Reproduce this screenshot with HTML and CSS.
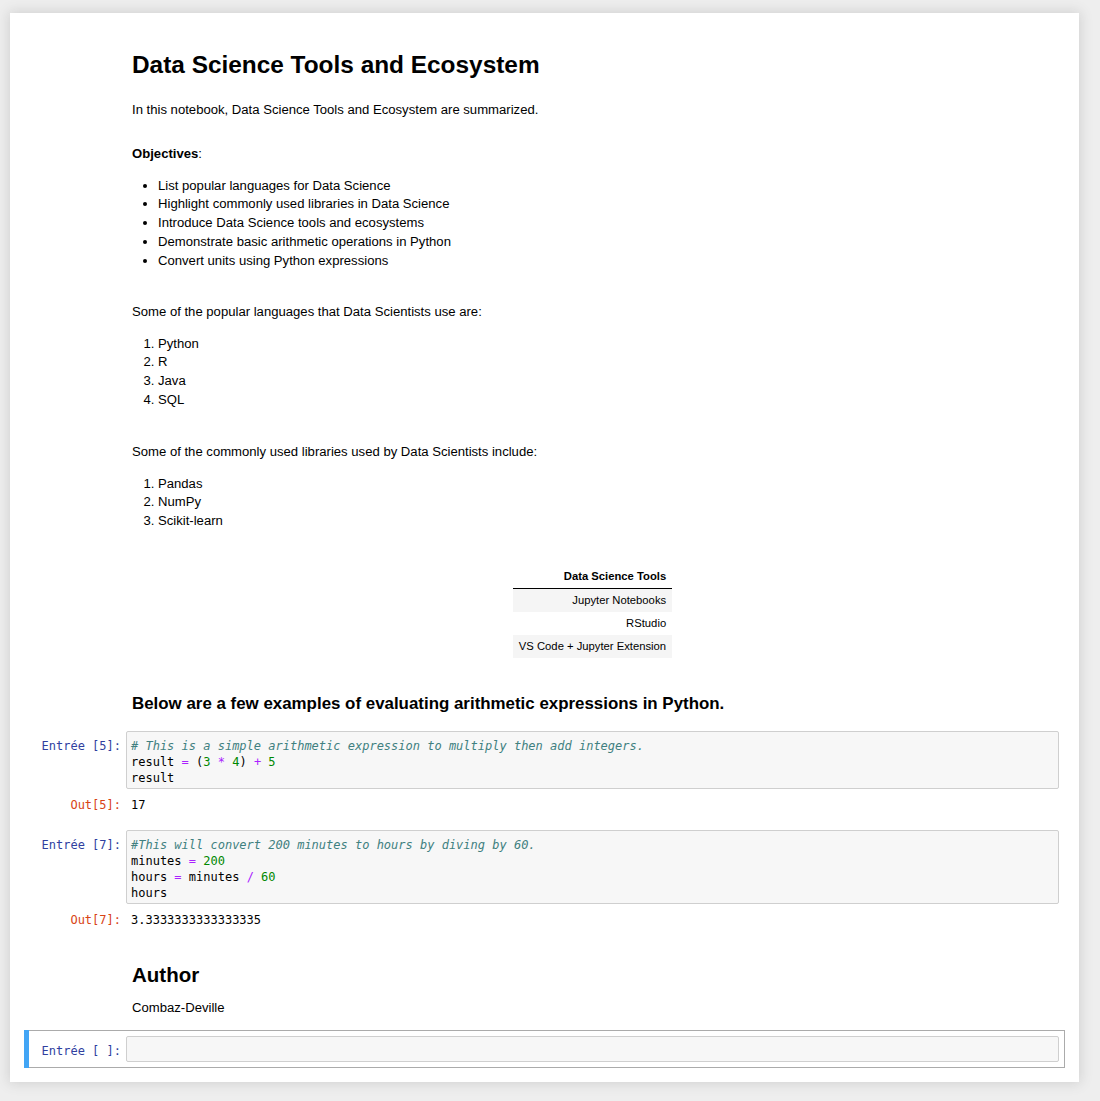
FILE: index.html
```html
<!DOCTYPE html>
<html lang="fr">
<head>
<meta charset="utf-8">
<title>Data Science Tools and Ecosystem</title>
<link rel="stylesheet" href="styles.css">
</head>
<body>
<div class="notebook">
  <div class="cell md-cell">
    <div class="prompt"></div>
    <div class="render">
      <h1 class="title">Data Science Tools and Ecosystem</h1>
      <p class="p-intro">In this notebook, Data Science Tools and Ecosystem are summarized.</p>
      <p class="p-obj"><strong>Objectives</strong>:</p>
      <ul class="list">
        <li>List popular languages for Data Science</li>
        <li>Highlight commonly used libraries in Data Science</li>
        <li>Introduce Data Science tools and ecosystems</li>
        <li>Demonstrate basic arithmetic operations in Python</li>
        <li>Convert units using Python expressions</li>
      </ul>
      <p class="p-section">Some of the popular languages that Data Scientists use are:</p>
      <ol class="list">
        <li>Python</li>
        <li>R</li>
        <li>Java</li>
        <li>SQL</li>
      </ol>
      <p class="p-section p-section2">Some of the commonly used libraries used by Data Scientists include:</p>
      <ol class="list">
        <li>Pandas</li>
        <li>NumPy</li>
        <li>Scikit-learn</li>
      </ol>
      <table class="tools">
        <thead><tr><th>Data Science Tools</th></tr></thead>
        <tbody>
          <tr><td>Jupyter Notebooks</td></tr>
          <tr><td>RStudio</td></tr>
          <tr><td>VS Code + Jupyter Extension</td></tr>
        </tbody>
      </table>
      <h4 class="sub">Below are a few examples of evaluating arithmetic expressions in Python.</h4>
    </div>
  </div>

  <div class="cell code-cell">
    <div class="row">
      <div class="prompt in-prompt">Entrée&nbsp;[5]:</div>
      <div class="input"><pre class="code"><span class="c"># This is a simple arithmetic expression to multiply then add integers.</span>
result <span class="o">=</span> (<span class="n">3</span> <span class="o">*</span> <span class="n">4</span>) <span class="o">+</span> <span class="n">5</span>
result</pre></div>
    </div>
    <div class="row out-row">
      <div class="prompt out-prompt">Out[5]:</div>
      <div class="output"><pre class="out">17</pre></div>
    </div>
  </div>

  <div class="cell code-cell">
    <div class="row">
      <div class="prompt in-prompt">Entrée&nbsp;[7]:</div>
      <div class="input"><pre class="code"><span class="c">#This will convert 200 minutes to hours by diving by 60.</span>
minutes <span class="o">=</span> <span class="n">200</span>
hours <span class="o">=</span> minutes <span class="o">/</span> <span class="n">60</span>
hours</pre></div>
    </div>
    <div class="row out-row">
      <div class="prompt out-prompt">Out[7]:</div>
      <div class="output"><pre class="out">3.3333333333333335</pre></div>
    </div>
  </div>

  <div class="cell md-cell">
    <div class="prompt"></div>
    <div class="render">
      <h2 class="author">Author</h2>
      <p class="p-author">Combaz-Deville</p>
    </div>
  </div>

  <div class="cell code-cell selected">
    <div class="row">
      <div class="prompt in-prompt">Entrée&nbsp;[&nbsp;]:</div>
      <div class="input"><pre class="code code-empty"> </pre></div>
    </div>
  </div>
</div>
</body>
</html>
```

FILE: styles.css
```css
html, body {
  margin: 0;
  padding: 0;
}
body {
  background: #eeeeee;
  padding-top: 13px;
  min-height: 1101px;
  box-sizing: border-box;
  font-family: "Liberation Sans", Arial, sans-serif;
  font-size: 13.125px;
  line-height: 18.75px;
  color: #000;
}
.notebook {
  width: 1069px;
  margin-left: 10px;
  box-sizing: border-box;
  padding: 14px 14px 14px 14px;
  background: #fff;
  box-shadow: 0 0 12px 1px rgba(87, 87, 87, 0.2);
}
.cell {
  position: relative;
  border: 1px solid transparent;
  padding: 5px;
}
.md-cell {
  display: flex;
}
.prompt {
  width: 96px;
  flex: none;
  box-sizing: border-box;
  padding-right: 5px;
  text-align: right;
  font-family: "DejaVu Sans Mono", monospace;
  font-size: 12px;
  line-height: 16px;
}
.render {
  flex: 1;
  padding: 0 6px;
}
.render p, .render h1, .render h2, .render h4, .render ul, .render ol {
  margin: 0;
}
.title {
  font-size: 24.4px;
  line-height: 29px;
  font-weight: bold;
  margin-top: 17px !important;
}
.p-intro { margin-top: 21.6px !important; }
.p-obj { margin-top: 25.25px !important; }
.list {
  margin-top: 13.25px !important;
  padding-left: 26px;
}
.p-section { margin-top: 32.25px !important; }
.p-section2 { margin-top: 33px !important; }

.tools {
  margin: 33.6px auto 0;
  border-collapse: collapse;
  font-size: 11.25px;
  line-height: 12px;
}
.tools th, .tools td {
  text-align: right;
  padding: 5.5px 5.6px;
}
.tools th {
  font-weight: bold;
  padding: 5.25px 5.6px 6.25px;
  border-bottom: 1px solid #000;
}
.tools tbody tr:nth-child(odd) {
  background: #f5f5f5;
}
.sub {
  font-size: 16.9px;
  line-height: 20px;
  font-weight: bold;
  margin-top: 36.5px !important;
  margin-bottom: 5px !important;
}
.row {
  display: flex;
}
.in-prompt {
  color: #303f9f;
  padding-top: 7px;
}
.out-prompt {
  color: #d84315;
}
.input {
  flex: 1;
  min-width: 0;
  background: #f7f7f7;
  border: 1px solid #cfcfcf;
  border-radius: 2px;
}
.code, .out {
  margin: 0;
  font-family: "DejaVu Sans Mono", monospace;
  font-size: 12px;
  line-height: 16px;
  color: #000;
  white-space: pre;
}
.code {
  padding: 6px 4px 2px;
  min-height: 16px;
}
.code-empty {
  padding: 4px 4px;
}
.out-row {
  margin-top: 8px;
  padding-bottom: 5px;
}
.output {
  flex: 1;
  padding-left: 5px;
}
.c { color: #408080; font-style: italic; }
.o { color: #aa22ff; }
.n { color: #008800; }

.author {
  font-size: 20.5px;
  line-height: 24px;
  font-weight: bold;
  margin-top: 18px !important;
}
.p-author {
  margin-top: 11.6px !important;
  margin-bottom: 6.6px !important;
}
.selected {
  border-color: #ababab;
}
.selected::before {
  content: "";
  position: absolute;
  left: -1px;
  top: -1px;
  width: 5px;
  height: calc(100% + 2px);
  background: #42a5f5;
}
```
